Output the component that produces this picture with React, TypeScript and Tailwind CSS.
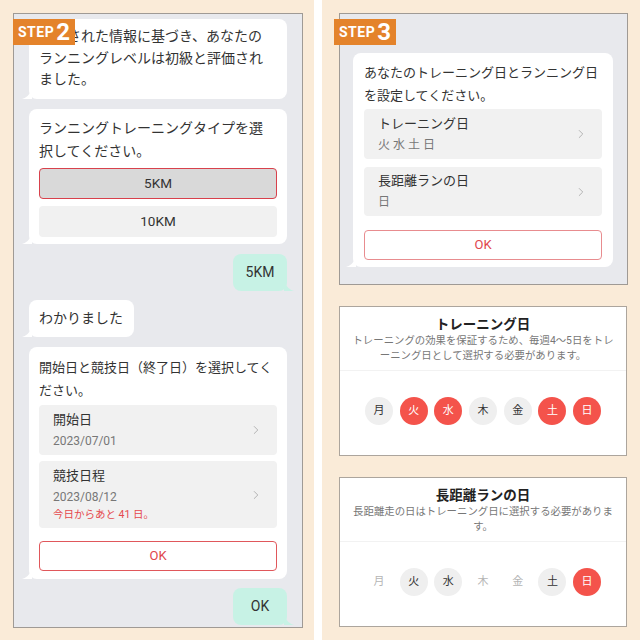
import React from 'react';
import { ChevronRight } from 'lucide-react';

const Tail: React.FC<{ side: 'left' | 'right'; color: string }> = ({ side, color }) =>
  side === 'left' ? (
    <svg width="10" height="10" viewBox="0 0 10 10" className="absolute -left-[7px] bottom-0">
      <path d="M10 0 V10 H0 Q7 8 10 0Z" fill={color} />
    </svg>
  ) : (
    <svg width="10" height="10" viewBox="0 0 10 10" className="absolute -right-[7px] bottom-0">
      <path d="M0 0 V10 H10 Q3 8 0 0Z" fill={color} />
    </svg>
  );

const Badge: React.FC<{ n: string; className: string }> = ({ n, className }) => (
  <div className={`absolute ${className} h-[26px] px-[5px] bg-[#e4832b] flex items-center gap-[2px] text-white font-bold`}>
    <span className="text-[14px] tracking-[0.5px]">STEP</span>
    <span className="text-[24px] leading-none">{n}</span>
  </div>
);

const Bubble: React.FC<{ className?: string; children: React.ReactNode }> = ({ className = '', children }) => (
  <div className={`relative shrink-0 bg-white rounded-[8px] ${className}`}>
    {children}
    <Tail side="left" color="#ffffff" />
  </div>
);

const UserBubble: React.FC<{ text: string }> = ({ text }) => (
  <div className="self-end shrink-0 relative w-[54px] h-[37px] bg-[#c7f2e5] rounded-[8px] flex items-center justify-center text-[14px] text-[#333]">
    {text}
    <Tail side="right" color="#c7f2e5" />
  </div>
);

const SelectItem: React.FC<{ label: string; sub: string; note?: string; h: string }> = ({ label, sub, note, h }) => (
  <div className={`${h} shrink-0 bg-[#f1f1f1] rounded-[4px] pl-[14px] pr-[14px] flex items-center justify-between`}>
    <div className="flex flex-col">
      <span className="text-[13px] leading-[20px] text-[#333]">{label}</span>
      <span className="text-[12px] leading-[20px] text-[#777] mt-[1px]">{sub}</span>
      {note && <span className="text-[10.5px] leading-[16px] text-[#e5484d]">{note}</span>}
    </div>
    <ChevronRight size={14} strokeWidth={1.5} className="text-[#aaa]" />
  </div>
);

const Day: React.FC<{ d: string; state: 'on' | 'off' | 'dim' }> = ({ d, state }) => {
  const cls =
    state === 'on'
      ? 'bg-[#f4534b] text-white'
      : state === 'off'
      ? 'bg-[#efefef] text-[#333]'
      : 'text-[#b5b5b5]';
  return (
    <div className={`w-[28px] h-[28px] rounded-full flex items-center justify-center text-[11px] ${cls}`}>{d}</div>
  );
};

const DayCard: React.FC<{ title: string; desc: string; days: ('on' | 'off' | 'dim')[] }> = ({ title, desc, days }) => {
  const names = ['月', '火', '水', '木', '金', '土', '日'];
  return (
    <div className="w-[288px] h-[150px] bg-white border border-[#aca59d] flex flex-col">
      <div className="h-[64px] border-b border-[#f2f2f2] flex flex-col items-center pt-[7px]">
        <div className="text-[13.5px] font-bold leading-[20px] text-[#222]">{title}</div>
        <div className="w-[262px] text-center text-[10.4px] leading-[14.5px] text-[#777]">{desc}</div>
      </div>
      <div className="flex-1 flex items-center justify-center gap-[6.7px] pb-[4px]">
        {days.map((s, i) => (
          <Day key={names[i]} d={names[i]} state={s} />
        ))}
      </div>
    </div>
  );
};

export default function App() {
  return (
    <div className="w-[640px] h-[640px] flex bg-[#faebd8] font-['Roboto','Noto_Sans_CJK_JP',sans-serif] text-[#333]">
      {/* left: STEP 2 */}
      <div className="w-[314px] pt-[13px] pl-[13px]">
        <div className="relative w-[290px] h-[615px] bg-[#e8e9ed] border border-[#9f9a95] pl-[15px] pr-[15px] pt-[5px] flex flex-col">
          <Bubble className="h-[80px] px-[10px] pt-[7px] text-[14px] leading-[21.7px]">
            <p>入力された情報に基づき、あなたの</p>
            <p>ランニングレベルは初級と評価され</p>
            <p>ました。</p>
          </Bubble>
          <Bubble className="mt-[10px] px-[10px] pt-[8px] pb-[7px]">
            <p className="text-[14px] leading-[23px]">ランニングトレーニングタイプを選<br />択してください。</p>
            <div className="mt-[5px] h-[31px] bg-[#d9d9d9] border border-[#d8414c] rounded-[4px] flex items-center justify-center text-[13.5px]">
              5KM
            </div>
            <div className="mt-[7px] h-[31px] bg-[#f1f1f1] rounded-[4px] flex items-center justify-center text-[13.5px]">
              10KM
            </div>
          </Bubble>
          <div className="mt-[10px] shrink-0 flex flex-col">
            <UserBubble text="5KM" />
          </div>
          <Bubble className="mt-[9px] w-[105px] h-[37px] px-[10px] flex items-center text-[14px]">
            わかりました
          </Bubble>
          <Bubble className="mt-[10px] px-[10px] pt-[9px] pb-[8px]">
            <p className="text-[13px] leading-[23px] whitespace-nowrap">
              開始日と競技日（終了日）を選択してく
              <br />
              ださい。
            </p>
            <div className="mt-[3px] flex flex-col gap-[6px]">
              <SelectItem h="h-[50px]" label="開始日" sub="2023/07/01" />
              <SelectItem h="h-[67px]" label="競技日程" sub="2023/08/12" note="今日からあと 41 日。" />
            </div>
            <div className="mt-[13px] h-[30px] bg-white border border-[#e0575b] rounded-[4px] flex items-center justify-center text-[13px] text-[#e0474c]">
              OK
            </div>
          </Bubble>
          <div className="mt-[9px] shrink-0 flex flex-col">
            <UserBubble text="OK" />
          </div>
          <Badge n="2" className="-left-px top-[5px]" />
        </div>
      </div>

      <div className="w-[8px] bg-white" />

      {/* right: STEP 3 */}
      <div className="w-[318px] pt-[13px] pl-[17px] flex flex-col">
        <div className="relative w-[289px] h-[272px] bg-[#e8e9ed] border border-[#9f9a95] pl-[13px] pr-[14px] pt-[39px]">
          <Bubble className="px-[11px] pt-[8px] pb-[7px]">
            <p className="text-[13px] leading-[23px]">あなたのトレーニング日とランニング日<br />を設定してください。</p>
            <div className="mt-[2px] flex flex-col gap-[8px]">
              <SelectItem h="h-[50px]" label="トレーニング日" sub="火 水 土 日" />
              <SelectItem h="h-[49px]" label="長距離ランの日" sub="日" />
            </div>
            <div className="mt-[14px] h-[30px] bg-white border border-[#e88c8f] rounded-[4px] flex items-center justify-center text-[13px] text-[#e0474c]">
              OK
            </div>
          </Bubble>
          <Badge n="3" className="-left-[6px] top-[5px]" />
        </div>
        <div className="mt-[21px]">
          <DayCard
            title="トレーニング日"
            desc="トレーニングの効果を保証するため、毎週4〜5日をトレーニング日として選択する必要があります。"
            days={['off', 'on', 'on', 'off', 'off', 'on', 'on']}
          />
        </div>
        <div className="mt-[21px]">
          <DayCard
            title="長距離ランの日"
            desc="長距離走の日はトレーニング日に選択する必要があります。"
            days={['dim', 'off', 'off', 'dim', 'dim', 'off', 'on']}
          />
        </div>
      </div>
    </div>
  );
}
